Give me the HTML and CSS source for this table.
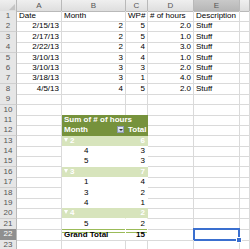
FILE: index.html
```html
<!DOCTYPE html>
<html lang="en">
<head>
  <meta charset="UTF-8" />
  <title>Workbook1</title>
  <link rel="stylesheet" href="styles.css">
</head>
<body>
  <div class="sheet">
    <div class="row head">
      <div class="corner"><span class="corner-tri"></span></div>
      <div class="ch">A</div><div class="ch">B</div><div class="ch">C</div><div class="ch">D</div><div class="ch sel">E</div><div class="ch"></div>
    </div>

    <div class="row"><div class="rh">1</div><div>Date</div><div>Month</div><div>WP#</div><div># of hours</div><div>Description</div><div></div></div>
    <div class="row"><div class="rh">2</div><div class="n">2/15/13</div><div class="n">2</div><div class="n">5</div><div class="n">2.0</div><div>Stuff</div><div></div></div>
    <div class="row"><div class="rh">3</div><div class="n">2/17/13</div><div class="n">2</div><div class="n">5</div><div class="n">1.0</div><div>Stuff</div><div></div></div>
    <div class="row"><div class="rh">4</div><div class="n">2/22/13</div><div class="n">2</div><div class="n">4</div><div class="n">3.0</div><div>Stuff</div><div></div></div>
    <div class="row"><div class="rh">5</div><div class="n">3/10/13</div><div class="n">3</div><div class="n">4</div><div class="n">1.0</div><div>Stuff</div><div></div></div>
    <div class="row"><div class="rh">6</div><div class="n">3/10/13</div><div class="n">3</div><div class="n">3</div><div class="n">2.0</div><div>Stuff</div><div></div></div>
    <div class="row"><div class="rh">7</div><div class="n">3/18/13</div><div class="n">3</div><div class="n">1</div><div class="n">4.0</div><div>Stuff</div><div></div></div>
    <div class="row"><div class="rh">8</div><div class="n">4/5/13</div><div class="n">4</div><div class="n">5</div><div class="n">2.0</div><div>Stuff</div><div></div></div>
    <div class="row"><div class="rh">9</div><div></div><div></div><div></div><div></div><div></div><div></div></div>
    <div class="row"><div class="rh">10</div><div></div><div></div><div></div><div></div><div></div><div></div></div>

    <!-- pivot table: Sum of # of hours by Month / WP# -->
    <div class="row"><div class="rh">11</div><div></div><div class="pv-top">Sum of # of hours</div><div></div><div></div><div></div></div>
    <div class="row"><div class="rh">12</div><div></div><div class="pv-hd">Month<span class="dd"></span></div><div class="pv-hd n">Total</div><div></div><div></div><div></div></div>
    <div class="row"><div class="rh">13</div><div></div><div class="pv-grp"><span class="tri"></span>2</div><div class="pv-grp n">6</div><div></div><div></div><div></div></div>
    <div class="row"><div class="rh">14</div><div></div><div class="pv-item">4</div><div class="pv-val n">3</div><div></div><div></div><div></div></div>
    <div class="row"><div class="rh">15</div><div></div><div class="pv-item">5</div><div class="pv-val n">3</div><div></div><div></div><div></div></div>
    <div class="row"><div class="rh">16</div><div></div><div class="pv-grp"><span class="tri"></span>3</div><div class="pv-grp n">7</div><div></div><div></div><div></div></div>
    <div class="row"><div class="rh">17</div><div></div><div class="pv-item">1</div><div class="pv-val n">4</div><div></div><div></div><div></div></div>
    <div class="row"><div class="rh">18</div><div></div><div class="pv-item">3</div><div class="pv-val n">2</div><div></div><div></div><div></div></div>
    <div class="row"><div class="rh">19</div><div></div><div class="pv-item">4</div><div class="pv-val n">1</div><div></div><div></div><div></div></div>
    <div class="row"><div class="rh">20</div><div></div><div class="pv-grp"><span class="tri"></span>4</div><div class="pv-grp n">2</div><div></div><div></div><div></div></div>
    <div class="row"><div class="rh">21</div><div></div><div class="pv-item">5</div><div class="pv-val n">2</div><div></div><div></div><div></div></div>
    <div class="row"><div class="rh active">22</div><div></div><div class="pv-total">Grand Total</div><div class="pv-total n">15</div><div></div><div class="cur"></div><div></div></div>
    <div class="row"><div class="rh">23</div><div></div><div></div><div></div><div></div><div></div><div></div></div>
  </div>
</body>
</html>
```

FILE: styles.css
```css
:root {
  --grid: #dadada;
  --hdr-bg: #e6e6e6;
  --hdr-line: #b9b9b9;
  --pv-dark: #76923c;
  --pv-light: #d7e4bc;
  --pv-line: #9bbb59;
  --sel-blue: #3a6fcf;
}

body {
  margin: 0;
  background: #fff;
  font-family: 'Liberation Sans', Arial, sans-serif;
  font-size: 8px;
  color: #000;
  overflow: hidden;
}

.sheet {
  width: 250px;
}

.row {
  display: grid;
  grid-template-columns: 17px 45px 64px 22px 46px 46px 10px;
  height: 10.4px;
  line-height: 10px;
}

.row > div {
  position: relative;
  border-right: 1px solid var(--grid);
  border-bottom: 1px solid var(--grid);
  padding: 0 2px;
  white-space: nowrap;
  overflow: visible;
}

.n {
  text-align: right;
}

/* column and row headers */
.row.head {
  height: 11px;
  line-height: 11px;
}

.row.head > div {
  background: linear-gradient(#efefef, #dedede);
  border-right-color: var(--hdr-line);
  border-bottom-color: var(--hdr-line);
  color: #555;
  text-align: center;
}

.row.head > .sel {
  background: linear-gradient(#c9c9c9, #b6b6b6);
}

.corner-tri {
  position: absolute;
  right: 1px;
  bottom: 1px;
  width: 0;
  height: 0;
  border-left: 6px solid transparent;
  border-bottom: 6px solid #c4c4c4;
}

.row > .rh {
  background: var(--hdr-bg);
  border-right-color: var(--hdr-line);
  border-bottom-color: #cfcfcf;
  color: #555;
  text-align: center;
  padding: 0;
}

.row > .rh.active {
  background: #8f8f8f;
  color: #fff;
}

/* pivot table */
.row > .pv-top,
.row > .pv-hd {
  background: var(--pv-dark);
  border-color: var(--pv-dark);
  color: #fff;
  font-weight: bold;
}

.row > .pv-top {
  grid-column: span 2;
  border-bottom-color: #82a04a;
}

.dd {
  position: absolute;
  right: 1px;
  top: 1px;
  width: 7px;
  height: 7px;
  background: linear-gradient(#e9eef5, #c3cfdd);
  border: 1px solid #8c9bb0;
  box-sizing: border-box;
}

.dd::after {
  content: "";
  position: absolute;
  left: 1px;
  top: 2px;
  border-left: 2px solid transparent;
  border-right: 2px solid transparent;
  border-top: 2px solid #333;
}

.row > .pv-grp {
  background: var(--pv-light);
  border-right-color: var(--pv-light);
  border-bottom-color: #fff;
  color: #fff;
  font-weight: bold;
}

.tri {
  display: inline-block;
  margin-right: 2px;
  border-left: 2.5px solid transparent;
  border-right: 2.5px solid transparent;
  border-top: 4px solid #fff;
  vertical-align: 1px;
}

.row > .pv-item,
.row > .pv-val {
  border-right-color: #fff;
  border-bottom-color: #fff;
}

.row > .pv-item {
  padding-left: 22px;
}

.row > .pv-total {
  border-right-color: #fff;
  font-weight: bold;
  box-shadow: inset 0 1px 0 var(--pv-line), inset 0 3px 0 #fff, inset 0 4px 0 var(--pv-line);
  line-height: 11px;
}

.row:nth-child(22) > .pv-item,
.row:nth-child(22) > .pv-val {
  border-bottom-color: var(--pv-line);
}

/* current cell E22 */
.cur::after {
  content: "";
  position: absolute;
  left: -1px;
  top: -1px;
  right: -1px;
  bottom: -1px;
  border: 2px solid var(--sel-blue);
}

.cur::before {
  content: "";
  position: absolute;
  right: -3px;
  bottom: -3px;
  width: 4px;
  height: 4px;
  background: var(--sel-blue);
  border: 1px solid #fff;
  z-index: 1;
}
```
